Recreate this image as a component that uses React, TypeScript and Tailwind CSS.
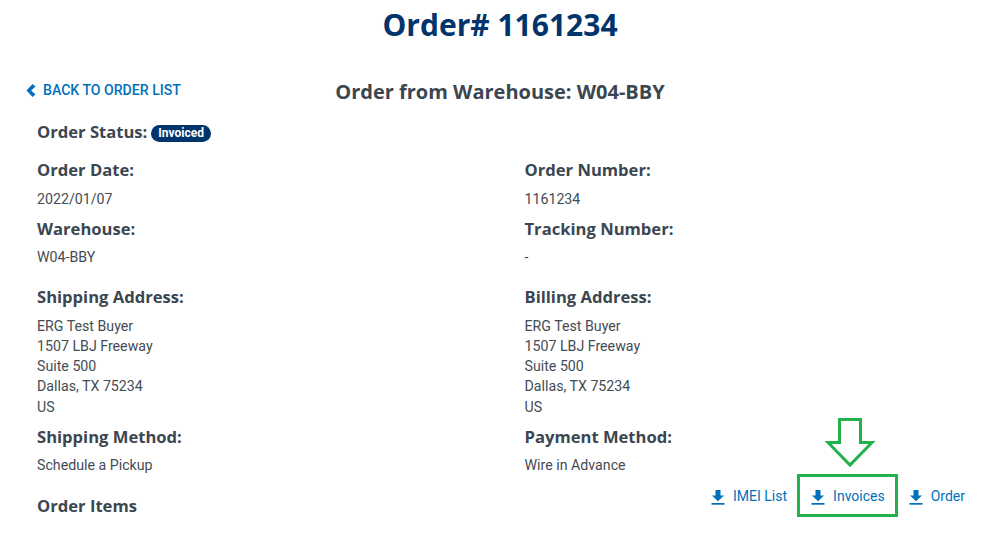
const heading = "font-['Open_Sans',sans-serif] font-bold text-[#3c4650]";

function BackChevron() {
  return (
    <svg viewBox="0 0 10 13" className="h-[13px] w-[10px] fill-[#0071bc]">
      <path d="M6.500 0 9.500 2.600 5.200 6.500 9.500 10.400 6.500 13 0.500 6.500z" />
    </svg>
  );
}

function DownloadIcon() {
  return (
    <svg viewBox="0 0 14 16" className="h-[16px] w-[14px] fill-[#0071bc]">
      <path d="M4.500 1h5v5.500H13L7 12.200 1 6.500h3.500z" />
      <rect x="0.500" y="14" width="13" height="1.700" />
    </svg>
  );
}

function Field({ label, value, className, tight }: { label: string; value: string[]; className: string; tight?: boolean }) {
  return (
    <div className={className}>
      <h4 className={`${heading} text-[16.600px] leading-[24px]`}>{label}</h4>
      <div className={`${tight ? "mt-[5.500px]" : "mt-[6.500px]"} text-[14.200px] leading-[20.300px] text-[#444c54]`}>
        {value.map((line) => (
          <div key={line}>{line}</div>
        ))}
      </div>
    </div>
  );
}

function FileLink({ label }: { label: string }) {
  return (
    <a className="flex items-center gap-[8px] text-[14px] text-[#0071bc]">
      <DownloadIcon />
      {label}
    </a>
  );
}

export default function App() {
  const address = ["ERG Test Buyer", "1507 LBJ Freeway", "Suite 500", "Dallas, TX 75234", "US"];

  return (
    <div className="relative h-[533px] w-[991px] overflow-hidden bg-white font-['Roboto',sans-serif]">
      <h1 className="pl-[9px] pt-[5px] text-center font-['Open_Sans',sans-serif] text-[30px] font-bold leading-[40px] text-[#00346b]">
        Order# 1161234
      </h1>

      {/* back link + warehouse title */}
      <div className="relative mt-[32px] h-[28px]">
        <a className="absolute left-[26px] top-[3px] flex items-center gap-[7px] text-[14.100px] font-medium leading-[20px] text-[#0071bc]">
          <BackChevron />
          BACK TO ORDER LIST
        </a>
        <h3 className={`${heading} pl-[9px] pt-[1px] text-center text-[20px] leading-[28px]`}>
          Order from Warehouse: W04-BBY
        </h3>
      </div>

      <div className="pl-[37px] pt-[15px]">
        <div className="flex items-center gap-[4px]">
          <span className={`${heading} text-[16.600px] leading-[24px]`}>Order Status:</span>
          <span className="mt-[3px] rounded-full bg-[#00346b] px-[7px] text-[12px] font-bold leading-[17px] text-white">
            Invoiced
          </span>
        </div>

        <div className="mt-[14px] grid grid-cols-[487.500px_1fr]">
          <Field label="Order Date:" value={["2022/01/07"]} className="h-[59px]" />
          <Field label="Order Number:" value={["1161234"]} className="h-[59px]" />
          <Field label="Warehouse:" value={["W04-BBY"]} className="h-[68px]" tight />
          <Field label="Tracking Number:" value={["-"]} className="h-[68px]" tight />
          <Field label="Shipping Address:" value={address} className="h-[140px]" />
          <Field label="Billing Address:" value={address} className="h-[140px]" />
          <Field label="Shipping Method:" value={["Schedule a Pickup"]} className="h-[69px]" tight />
          <Field label="Payment Method:" value={["Wire in Advance"]} className="h-[69px]" tight />
        </div>

        <div className="flex items-center justify-between pr-[26px]">
          <h4 className={`${heading} text-[16.600px] leading-[24px]`}>Order Items</h4>
          <div className="-mt-[19px] flex items-center gap-[24px]">
            <FileLink label="IMEI List" />
            <FileLink label="Invoices" />
            <FileLink label="Order" />
          </div>
        </div>
      </div>

      {/* green callout drawn over the page */}
      <div className="absolute left-[797px] top-[474px] h-[43px] w-[101px] border-[3px] border-[#22b14c]" />
      <svg viewBox="0 0 52 52" className="absolute left-[825px] top-[417px] h-[52px] w-[52px] fill-white stroke-[#22b14c] stroke-[3]">
        <path d="M14.500 2.500h21v23H47L25 48 3 25.500h11.500z" />
      </svg>
    </div>
  );
}
